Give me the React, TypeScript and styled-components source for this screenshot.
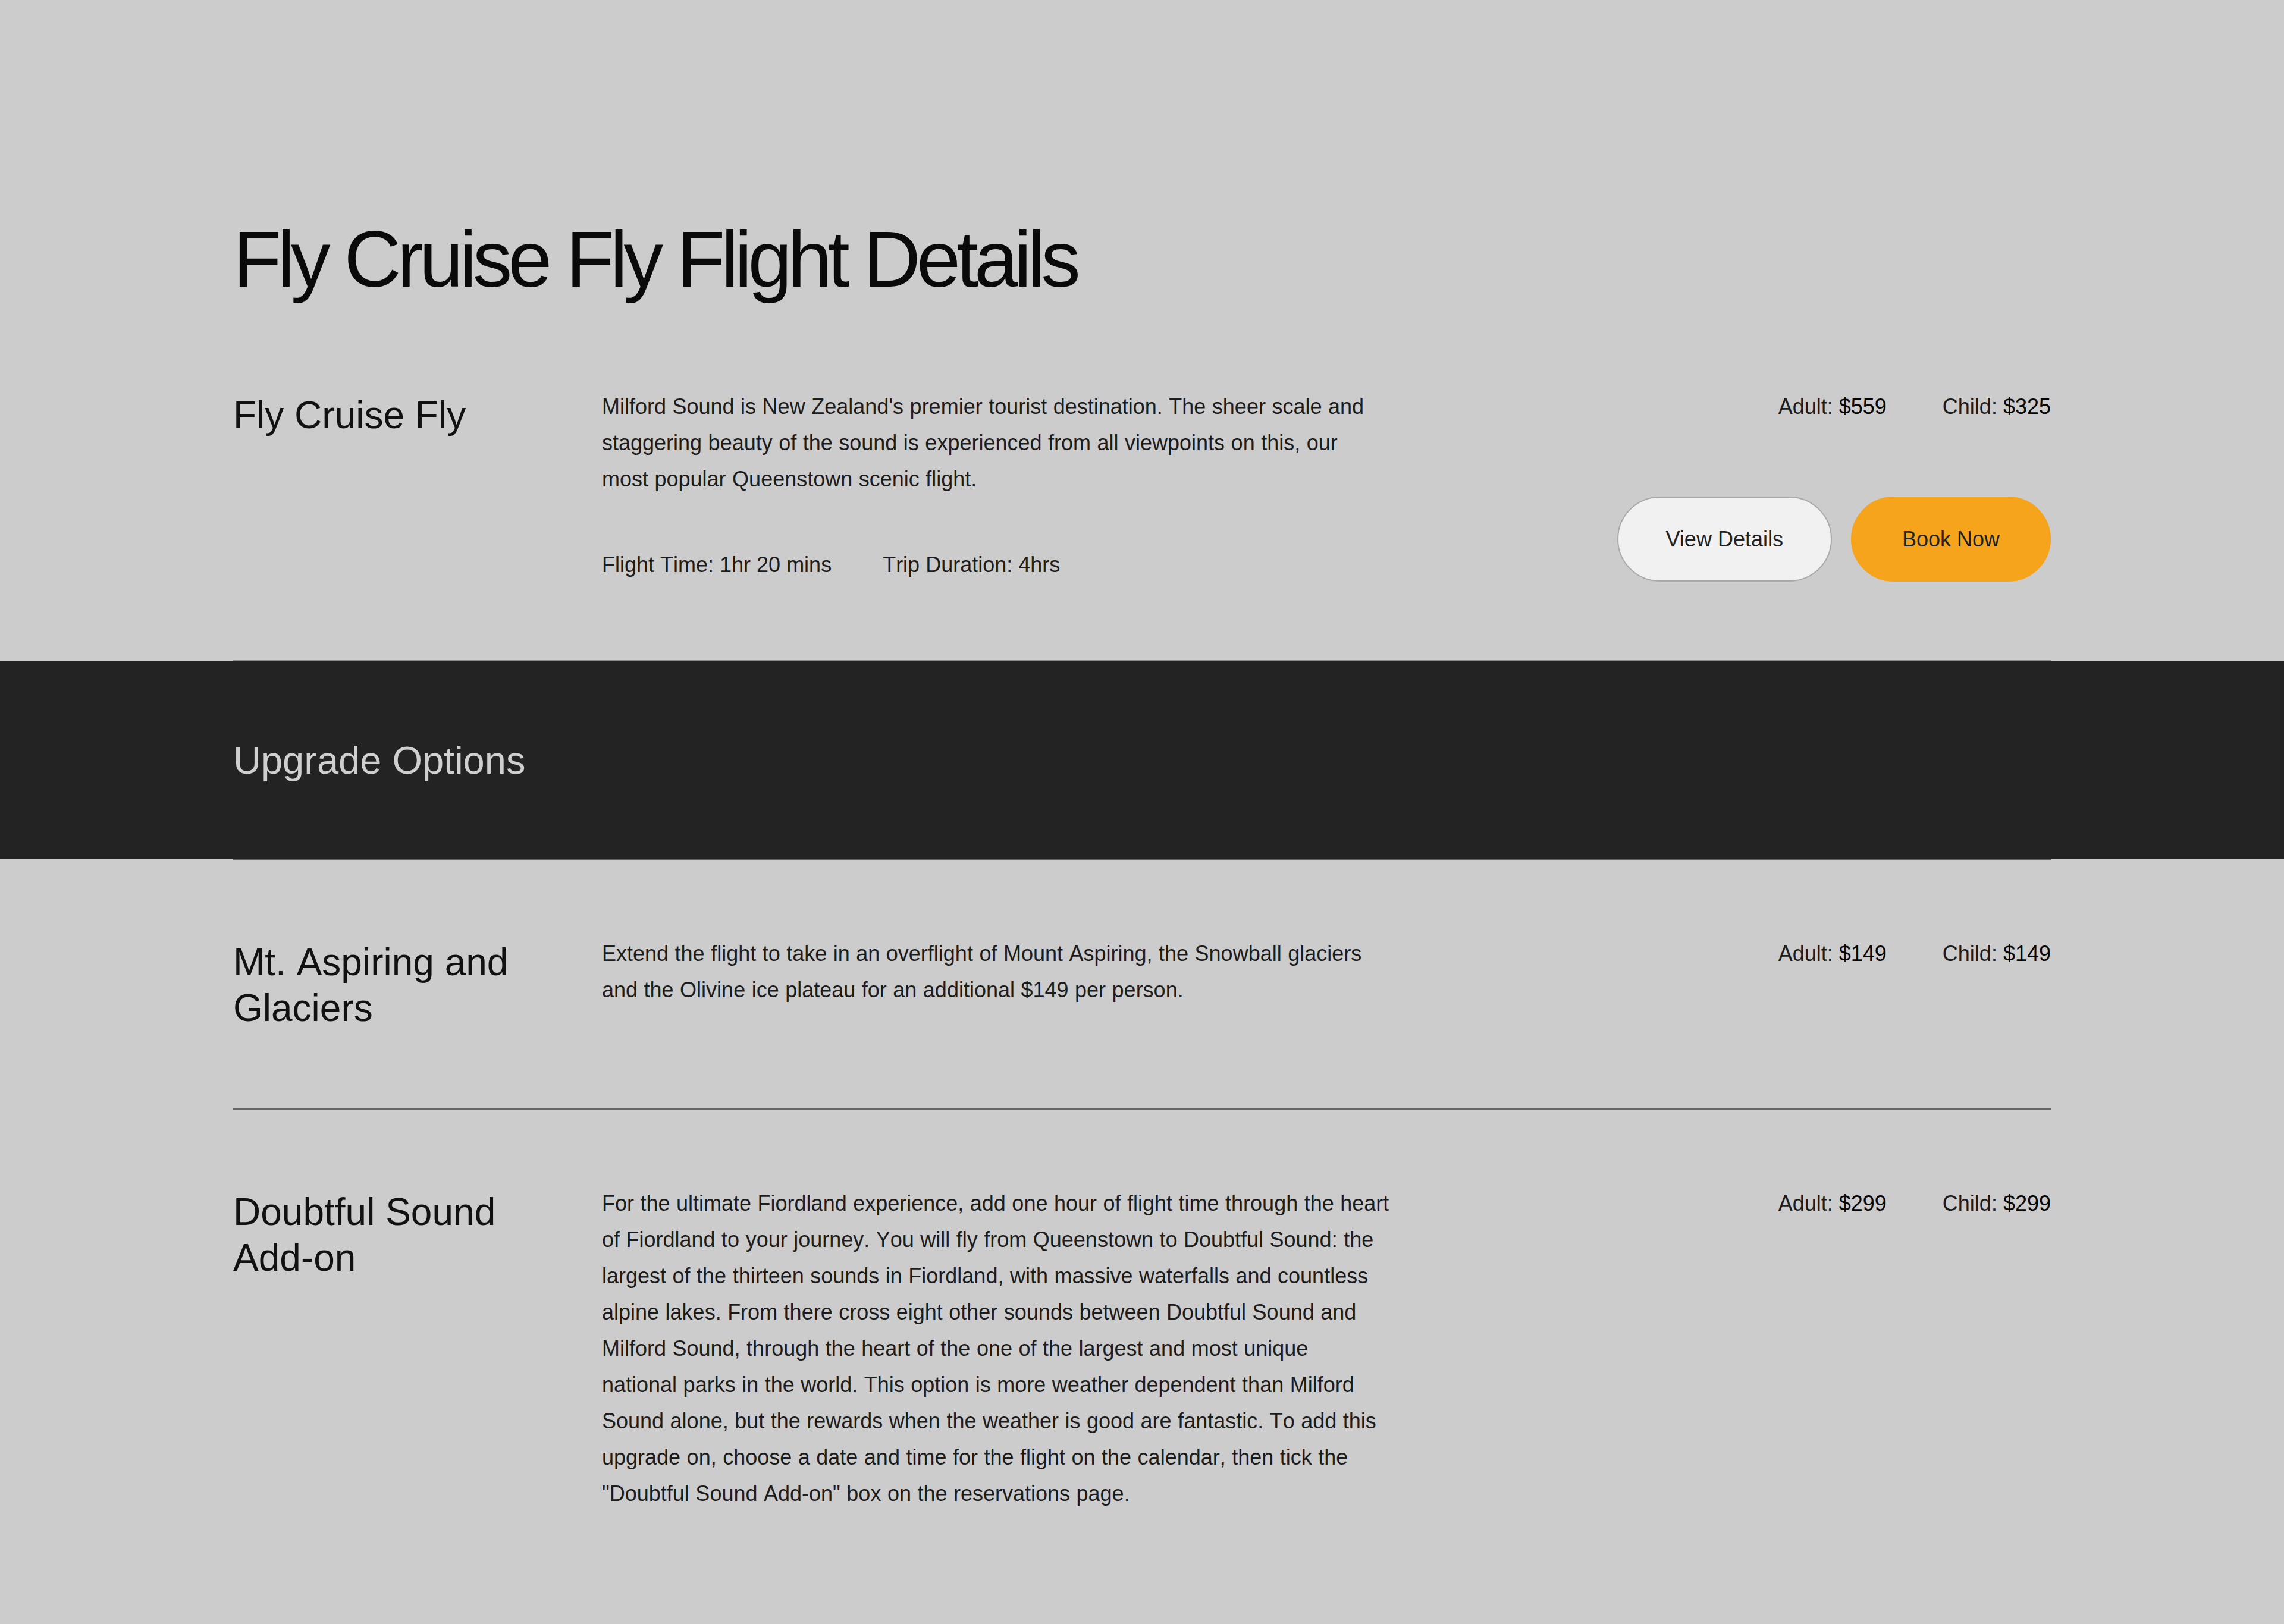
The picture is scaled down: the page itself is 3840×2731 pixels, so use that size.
import React from 'react'
import styled, { createGlobalStyle } from 'styled-components'

const GlobalStyle = createGlobalStyle`
  html, body {
    margin: 0;
    padding: 0;
    background: #cccccc;
  }
  body {
    font-family: "Liberation Sans", Arial, Helvetica, sans-serif;
    color: #1c1c1c;
    font-kerning: none;
  }
  * {
    box-sizing: border-box;
  }
`

const data = {
    title: 'Fly Cruise Fly Flight Details',
    flight: {
        name: 'Fly Cruise Fly',
        text: "Milford Sound is New Zealand's premier tourist destination. The sheer scale and staggering beauty of the sound is experienced from all viewpoints on this, our most popular Queenstown scenic flight.",
        flightTime: '1hr 20 mins',
        duration: '4hrs',
        adult: 559,
        child: 325,
    },
    upgrades: [
        {
            name: 'Mt. Aspiring and Glaciers',
            text: 'Extend the flight to take in an overflight of Mount Aspiring, the Snowball glaciers and the Olivine ice plateau for an additional $149 per person.',
            adult: 149,
            child: 149,
        },
        {
            name: 'Doubtful Sound Add-on',
            text: 'For the ultimate Fiordland experience, add one hour of flight time through the heart of Fiordland to your journey. You will fly from Queenstown to Doubtful Sound: the largest of the thirteen sounds in Fiordland, with massive waterfalls and countless alpine lakes. From there cross eight other sounds between Doubtful Sound and Milford Sound, through the heart of the one of the largest and most unique national parks in the world. This option is more weather dependent than Milford Sound alone, but the rewards when the weather is good are fantastic. To add this upgrade on, choose a date and time for the flight on the calendar, then tick the "Doubtful Sound Add-on" box on the reservations page.',
            adult: 299,
            child: 299,
        },
    ],
}

const Page = styled.div`
  padding: 370px 0 59px;
`

const Inner = styled.div`
  margin: 0 392px;
`

const Title = styled.h1`
  margin: 0 0 24px;
  font-size: 133px;
  line-height: 133px;
  font-weight: 400;
  letter-spacing: -0.052em;
  color: #0a0a0a;
`

// text column width picked so the copy wraps where the original does
const Row = styled.section<{ $divider?: 'top' | 'bottom' }>`
  display: grid;
  grid-template-columns: 620px 1323.6px 1fr;
  padding: 126px 0 130px;
  border-top: ${p => (p.$divider === 'top' ? '3px solid #666666' : 'none')};
  border-bottom: ${p => (p.$divider === 'bottom' ? '2px solid #8a8a8a' : 'none')};
`

const Name = styled.h2`
  margin: 7px 0 0;
  padding-right: 40px;
  font-size: 64px;
  line-height: 77px;
  font-weight: 400;
  color: #111111;
`

const Body = styled.div`
  display: flex;
  flex-direction: column;
`

const Text = styled.p`
  margin: 0;
  font-size: 36px;
  line-height: 61px;
  word-spacing: 0.5px;
`

const Meta = styled.div`
  display: flex;
  gap: 86px;
  margin-top: 83px;
  font-size: 36px;
  line-height: 61px;
`

const Side = styled.div`
  display: flex;
  flex-direction: column;
  align-items: flex-end;
  justify-content: space-between;
`

const Prices = styled.div`
  display: flex;
  gap: 94px;
  font-size: 36px;
  line-height: 61px;
  white-space: nowrap;
`

const Amount = styled.span`
  color: #050505;
`

const Actions = styled.div`
  display: flex;
  gap: 32px;
  margin-bottom: 2px;
`

const Button = styled.button<{ $primary?: boolean }>`
  height: 143px;
  padding: 0 ${p => (p.$primary ? '84px' : '80px')};
  border-radius: 72px;
  border: 2px solid ${p => (p.$primary ? '#f5a41b' : '#a9a9a9')};
  background: ${p => (p.$primary ? '#f5a41b' : '#f1f1f1')};
  color: #222222;
  font-family: inherit;
  font-size: 36px;
  cursor: pointer;
`

const Band = styled.div`
  display: flex;
  align-items: center;
  height: 332px;
  padding: 0 392px;
  background: #232323;
`

const BandTitle = styled.h2`
  margin: 0;
  font-size: 65px;
  line-height: 77px;
  font-weight: 400;
  color: #cfcfcf;
`

const PriceList = ({ adult, child }: { adult: number; child: number }) => (
    <Prices>
        <span>Adult: <Amount>${adult}</Amount></span>
        <span>Child: <Amount>${child}</Amount></span>
    </Prices>
)

const App = () => {
    const f = data.flight
    return (
        <Page>
            <GlobalStyle />
            <Inner>
                <Title>{data.title}</Title>
                <Row $divider="bottom">
                    <Name>{f.name}</Name>
                    <Body>
                        <Text>{f.text}</Text>
                        <Meta>
                            <span>Flight Time: {f.flightTime}</span>
                            <span>Trip Duration: {f.duration}</span>
                        </Meta>
                    </Body>
                    <Side>
                        <PriceList adult={f.adult} child={f.child} />
                        <Actions>
                            <Button>View Details</Button>
                            <Button $primary>Book Now</Button>
                        </Actions>
                    </Side>
                </Row>
            </Inner>
            <Band>
                <BandTitle>Upgrade Options</BandTitle>
            </Band>
            <Inner>
                {data.upgrades.map(u => (
                    <Row key={u.name} $divider="top">
                        <Name>{u.name}</Name>
                        <Body>
                            <Text>{u.text}</Text>
                        </Body>
                        <Side>
                            <PriceList adult={u.adult} child={u.child} />
                        </Side>
                    </Row>
                ))}
            </Inner>
        </Page>
    )
}

export default App
